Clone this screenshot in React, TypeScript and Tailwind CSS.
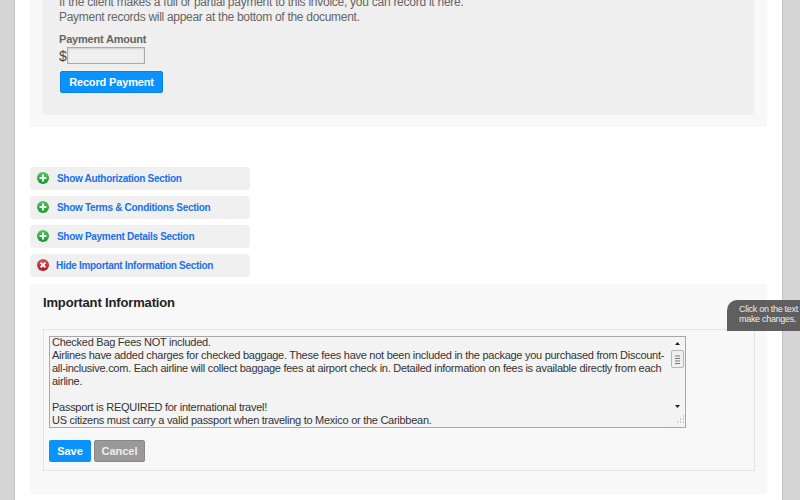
import React from "react";

function Plus() {
  return (
    <svg width="12" height="12" viewBox="0 0 12 12" className="shrink-0">
      <defs>
        <linearGradient id="g" x1="0" y1="0" x2="0" y2="1">
          <stop offset="0" stopColor="#52c45e" />
          <stop offset="1" stopColor="#169a2a" />
        </linearGradient>
      </defs>
      <circle cx="6" cy="6" r="6" fill="url(#g)" />
      <path d="M6 2.6v6.8M2.6 6h6.8" stroke="#fff" strokeWidth="2" />
    </svg>
  );
}

function Cross() {
  return (
    <svg width="12" height="12" viewBox="0 0 12 12" className="shrink-0">
      <defs>
        <linearGradient id="r" x1="0" y1="0" x2="0" y2="1">
          <stop offset="0" stopColor="#d9545a" />
          <stop offset="1" stopColor="#b01820" />
        </linearGradient>
      </defs>
      <circle cx="6" cy="6" r="6" fill="url(#r)" />
      <path d="M3.6 3.6l4.8 4.8M8.4 3.6l-4.8 4.8" stroke="#fff" strokeWidth="2" />
    </svg>
  );
}

function Toggle({ label, hide }: { label: string; hide?: boolean }) {
  return (
    <div className={`flex h-[23px] w-[220px] items-center rounded-[4px] bg-[#f0f0f0] pb-px pl-[7px] ${hide ? "gap-[7px]" : "gap-2"}`}>
      {hide ? <Cross /> : <Plus />}
      <span className="text-[10px] font-bold tracking-[-0.3px] text-[#1a70f0]">{label}</span>
    </div>
  );
}

export default function App() {
  return (
    <div className="relative flex h-[500px] w-[800px] overflow-hidden bg-[#d5d5d5] font-['Liberation_Sans',Arial,sans-serif]">
      <div className="ml-[14px] h-full w-[769px] shrink-0 border-x border-[#c4c4c4] bg-white pl-[15px] pr-[15px]">
        <div className="w-[737px] bg-[#f8f8f8] px-[13px] pb-3">
          <div className="-mt-[5px] h-[120px] rounded-b-[4px] bg-[#efefef] pl-4">
            <p className="text-[12px] leading-[15px] tracking-[-0.26px] text-[#666]">If the client makes a full or partial payment to this invoice, you can record it here.</p>
            <p className="text-[12px] leading-[15px] tracking-[-0.29px] text-[#666]">Payment records will appear at the bottom of the document.</p>
            <p className="mt-[7px] text-[11px] font-bold leading-[15px] tracking-[-0.2px] text-[#666]">Payment Amount</p>
            <div className="flex h-[17px] items-center">
              <span className="text-[14px] leading-4 text-[#444]">$</span>
              <div className="h-[17px] w-[78px] border border-[#aaa] bg-[#efefef] shadow-[inset_0_1px_2px_#ccc]" />
            </div>
            <div className="mt-[7px] ml-px flex h-[22px] w-[103px] items-center justify-center rounded-[2px] border border-[#0a80e8] bg-[#0a93ff] text-[11px] font-bold tracking-[-0.15px] text-white">Record Payment</div>
          </div>
        </div>

        <div className="mt-10 flex flex-col gap-[6px]">
          <Toggle label="Show Authorization Section" />
          <Toggle label="Show Terms & Conditions Section" />
          <Toggle label="Show Payment Details Section" />
          <Toggle label="Hide Important Information Section" hide />
        </div>

        <div className="mt-[7px] h-[210px] w-[737px] rounded-[3px] bg-[#f8f8f8] pl-[13px]">
          <h2 className="pt-[11px] text-[13px] font-bold leading-4 tracking-[-0.15px] text-[#222]">Important Information</h2>
          <div className="mt-[18px] h-[142px] w-[712px] border border-[#e4e4e4] px-[5px] pt-[6px]">
            <div className="flex h-[92px] w-[637px] border border-[#a8a8a8] bg-[#f3f3f3]">
              <div className="h-full flex-1 overflow-hidden pl-[2px] pr-[3px] text-[11px] leading-[13px] tracking-[-0.27px] text-[#333]">
                <p className="-mt-px">Checked Bag Fees NOT included.</p>
                <p>Airlines have added charges for checked baggage. These fees have not been included in the package you purchased from Discount-all-inclusive.com. Each airline will collect baggage fees at airport check in. Detailed information on fees is available directly from each airline.</p>
                <p className="mt-[13px]">Passport is REQUIRED for international travel!</p>
                <p>US citizens must carry a valid passport when traveling to Mexico or the Caribbean.</p>
              </div>
              <div className="relative h-full w-[15px] shrink-0 bg-[#f4f4f4]">
                <svg width="15" height="90" viewBox="0 0 15 90" className="absolute left-0 top-0">
                  <path d="M5 8l2.500-3 2.500 3z" fill="#222" />
                  <path d="M5 68l2.500 3 2.500-3z" fill="#222" />
                  <rect x="1.500" y="13.500" width="12" height="17" rx="1.500" fill="#f0f0f0" stroke="#b5b5b5" />
                  <path d="M5 19h5M5 21.500h5M5 24h5M5 26.500h5" stroke="#777" />
                  <path d="M13 79h1M10 82h1M13 82h1M7 85h1M10 85h1M13 85h1" stroke="#999" />
                </svg>
              </div>
            </div>
            <div className="mt-3 flex gap-[3px]">
              <div className="flex h-[22px] w-[42px] items-center justify-center rounded-[2px] bg-[#0a93ff] text-[11px] font-bold text-white">Save</div>
              <div className="flex h-[22px] w-[51px] items-center justify-center rounded-[2px] border border-[#888] bg-[#999] text-[11px] font-bold text-[#eee]">Cancel</div>
            </div>
          </div>
        </div>
      </div>

      <div className="absolute left-[727px] top-[300px] h-[31px] w-[73px] overflow-hidden rounded-tl-[10px] bg-[#5f5f5f] pl-[12px] pt-[5px] text-[9px] leading-[9.5px] tracking-[-0.3px] text-[#eee] whitespace-nowrap">
        <p>Click on the text to</p>
        <p>make changes.</p>
      </div>
    </div>
  );
}
